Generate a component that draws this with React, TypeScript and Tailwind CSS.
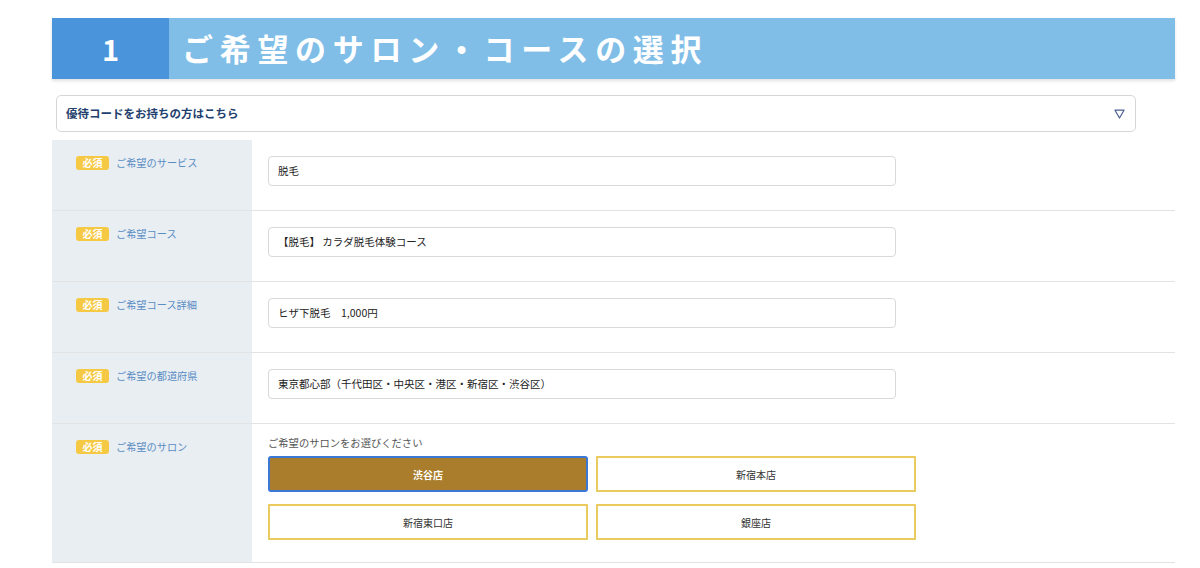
import React from "react";

const font = { fontFamily: '"Noto Sans CJK JP", "Noto Sans", sans-serif' };

function Label({ text }: { text: string }) {
  return (
    <div className="w-[200px] shrink-0 bg-[#e9eef3] pl-[24px] pt-[16px]">
      <div className="flex items-center gap-[7px]">
        <span className="inline-flex h-[14px] w-[33px] items-center justify-center rounded-[3px] bg-[#f6c944] text-[10px] font-bold leading-none text-white">
          必須
        </span>
        <span className="text-[10.2px] leading-none text-[#5a8dc3]">{text}</span>
      </div>
    </div>
  );
}

function InputRow({ label, value }: { label: string; value: string }) {
  return (
    <div className="flex h-[71px] border-b border-[#e3e3e3]">
      <Label text={label} />
      <div className="flex-1 pl-[16px] pt-[16px]">
        <div className="flex h-[30px] w-[628px] items-center rounded-[4px] border border-[#d9d9d9] bg-white pl-[9px] text-[10.5px] text-[#222]">
          {value}
        </div>
      </div>
    </div>
  );
}

export default function App() {
  return (
    <div className="min-h-[568px] w-[1200px] bg-white" style={font}>
      <div className="ml-[52px] w-[1123px] pt-[18px]">
        <div className="flex h-[61px] shadow-[0_2px_3px_rgba(0,0,0,0.12)]">
          <div className="flex w-[117px] items-center justify-center bg-[#4a94dc] text-[29px] font-bold text-white">
            1
          </div>
          <div className="flex flex-1 items-center bg-[#80bee8] pl-[13px] text-[31px] font-bold tracking-[6.7px] text-white">
            ご希望のサロン・コースの選択
          </div>
        </div>

        <div className="ml-[4px] mt-[16px] flex h-[37px] w-[1080px] items-center justify-between rounded-[5px] border border-[#d6d6d6] bg-white pl-[9px] pr-[10px]">
          <span className="text-[11.5px] font-bold text-[#233f6e]">優待コードをお持ちの方はこちら</span>
          <svg width="11" height="10" viewBox="0 0 11 10">
            <path d="M1 1.2 H10 L5.5 9 Z" fill="none" stroke="#4b5f92" strokeWidth="1.2" strokeLinejoin="round" />
          </svg>
        </div>

        <div className="mt-[8px]">
          <InputRow label="ご希望のサービス" value="脱毛" />
          <InputRow label="ご希望コース" value="【脱毛】 カラダ脱毛体験コース" />
          <InputRow label="ご希望コース詳細" value="ヒザ下脱毛　1,000円" />
          <InputRow label="ご希望の都道府県" value="東京都心部（千代田区・中央区・港区・新宿区・渋谷区）" />
          <div className="flex h-[139px] border-b border-[#e3e3e3]">
            <Label text="ご希望のサロン" />
            <div className="flex-1 pl-[16px] pt-[12px]">
              <div className="text-[10.3px] leading-[14px] text-[#555]">ご希望のサロンをお選びください</div>
              <div className="mt-[6px] grid w-[648px] grid-cols-2 gap-x-[8px] gap-y-[12px]">
                <div className="flex h-[36px] items-center justify-center rounded-[3px] border-2 border-[#3b78d6] bg-[#a97d2b] text-[10px] font-bold text-white">
                  渋谷店
                </div>
                <div className="flex h-[36px] items-center justify-center border-2 border-[#ebcb5d] bg-white text-[10px] text-[#333]">
                  新宿本店
                </div>
                <div className="flex h-[36px] items-center justify-center border-2 border-[#ebcb5d] bg-white text-[10px] text-[#333]">
                  新宿東口店
                </div>
                <div className="flex h-[36px] items-center justify-center border-2 border-[#ebcb5d] bg-white text-[10px] text-[#333]">
                  銀座店
                </div>
              </div>
            </div>
          </div>
        </div>
      </div>
    </div>
  );
}
